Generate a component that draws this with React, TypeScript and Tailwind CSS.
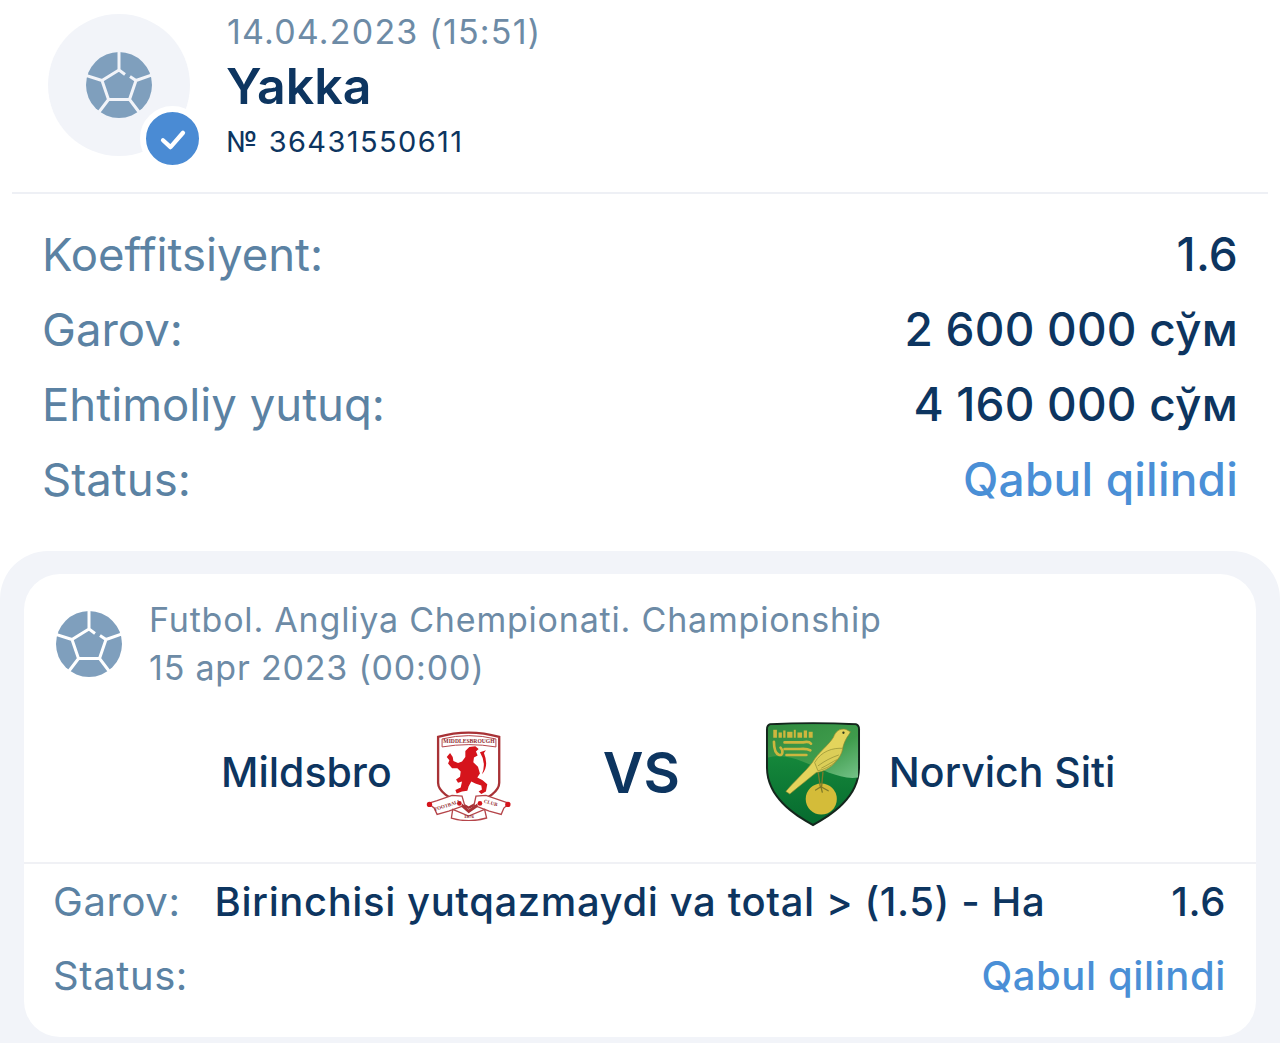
const rows = [
  { label: "Koeffitsiyent:", value: "1.6" },
  { label: "Garov:", value: "2 600 000 сўм" },
  { label: "Ehtimoliy yutuq:", value: "4 160 000 сўм" },
];

const BallIcon = ({ className, gapClass }: { className: string; gapClass: string }) => (
  <svg viewBox="0 0 66 66" className={className}>
    <circle cx="33" cy="33" r="33" fill="#7f9fbd" />
    <g fill="none" strokeWidth="3" className={gapClass}>
      <path d="M33 0V18L39 22.5M44 24.5L50 28.5L66 23M50 28.5L43.5 47.5L53 60M43.5 47.5H22.5L13 60M22.5 47.5L16 28.5L0 23.5M16 28.5L33 18" />
    </g>
  </svg>
);

const MiddlesbroughCrest = () => (
  <svg viewBox="30 35 270 280" className="w-[90px] h-[93px] shrink-0">
    <path d="M78 62Q170 36 262 62V200C262 235 205 255 170 275C135 255 78 235 78 200Z" fill="#fff" stroke="#a83236" strokeWidth="7" />
    <path d="M90 68Q170 48 252 68V92Q170 78 90 92Z" fill="#fff" stroke="#b5454a" strokeWidth="3" />
    <text x="171" y="79" textAnchor="middle" fontSize="17" fontWeight="700" fill="#8f2a2e" fontFamily="Liberation Serif, serif">MIDDLESBROUGH</text>
    {/* lion */}
    <path d="M160 104L172 92L190 90L200 98L192 106L197 118L186 124L184 138L198 152L204 172L196 184L212 192L226 204L222 226L208 234L200 226L210 220L208 208L190 202L178 196L170 210L166 224L150 226L134 232L130 222L146 214L150 196L138 200L132 190L144 182L146 166L136 156L120 156L108 142L112 132L104 122L114 110L122 122L124 134L138 140L150 136L160 122Z" fill="#d5141c" />
    <path d="M204 108Q224 140 210 174Q232 150 216 110L222 102Z" fill="#d5141c" />
    <path d="M48 262L75 254L120 238L150 240L158 268L110 285L75 295L66 276Z" fill="#fff" stroke="#b5454a" strokeWidth="4" />
    <path d="M292 262L268 254L222 238L192 240L186 268L232 285L268 295L276 276Z" fill="#fff" stroke="#b5454a" strokeWidth="4" />
    <path d="M122 280L170 300L218 280L224 306Q170 322 118 306Z" fill="#fff" stroke="#b5454a" strokeWidth="4" />
    <path d="M150 262L170 280L196 262L198 272L170 292L148 272Z" fill="#a83236" />
    <circle cx="52" cy="265" r="8" fill="#d5141c" />
    <circle cx="288" cy="265" r="8" fill="#d5141c" />
    <circle cx="142" cy="262" r="7" fill="#d5141c" />
    <circle cx="204" cy="262" r="7" fill="#d5141c" />
    <text x="108" y="272" transform="rotate(-18 108 272)" textAnchor="middle" fontSize="15" fontWeight="700" fill="#8f2a2e" fontFamily="Liberation Serif, serif">FOOTBALL</text>
    <text x="235" y="265" transform="rotate(16 235 265)" textAnchor="middle" fontSize="15" fontWeight="700" fill="#8f2a2e" fontFamily="Liberation Serif, serif">CLUB</text>
    <text x="171" y="307" textAnchor="middle" fontSize="15" fontWeight="700" fill="#8f2a2e" fontFamily="Liberation Serif, serif">1876</text>
  </svg>
);

const NorwichCrest = () => (
  <svg viewBox="45 28 290 320" className="w-[96px] h-[107px] shrink-0">
    <defs>
      <linearGradient id="gloss" x1="0" y1="0" x2="1" y2="1">
        <stop offset="0" stopColor="#2f8a3e" />
        <stop offset="0.6" stopColor="#3f9c4c" />
        <stop offset="1" stopColor="#74c288" />
      </linearGradient>
      <linearGradient id="lower" x1="0" y1="0" x2="0" y2="1">
        <stop offset="0" stopColor="#1c9440" />
        <stop offset="1" stopColor="#066b2f" />
      </linearGradient>
    </defs>
    <path d="M60 36Q190 30 320 36Q332 38 332 55V170C332 260 250 315 190 347C130 315 48 260 48 170V55Q48 38 60 36Z" fill="#14261c" />
    <path d="M62 42Q190 36 318 42Q326 44 326 56V170C326 256 248 308 190 340C132 308 54 256 54 170V56Q54 44 62 42Z" fill="url(#lower)" />
    <path d="M62 42Q190 36 318 42Q326 44 326 56V200C270 210 200 165 140 145C110 136 80 132 54 140V56Q54 44 62 42Z" fill="url(#gloss)" />
    <g fill="#cdb63e">
      <rect x="70" y="56" width="11" height="24" />
      <rect x="86" y="64" width="10" height="16" />
      <rect x="100" y="58" width="7" height="22" />
      <rect x="112" y="62" width="16" height="18" />
      <rect x="132" y="56" width="6" height="24" />
      <rect x="143" y="64" width="14" height="16" />
      <rect x="162" y="58" width="10" height="22" />
      <rect x="177" y="62" width="12" height="18" />
    </g>
    <g fill="none" stroke="#cdb63e" strokeWidth="8" strokeLinecap="round">
      <path d="M72 92C72 110 76 128 88 132C100 134 100 118 92 110" />
      <path d="M104 94H160Q178 90 184 98" />
      <path d="M104 114H150Q172 112 182 118" />
      <path d="M110 132H170" />
    </g>
    <path d="M290 55C270 50 258 62 252 78C240 100 205 125 188 155C165 185 130 215 108 242L120 250C150 225 175 205 200 185C240 180 270 150 280 110C284 95 288 85 300 68L303 62Z" fill="#e3d45c" stroke="#8d8a30" strokeWidth="2" />
    <path d="M195 155C215 120 250 110 280 112C275 145 245 170 205 180Z" fill="#dbce58" stroke="#8d8a30" strokeWidth="2" />
    <path d="M205 165C225 150 245 140 268 132M215 172C235 162 250 152 262 146" fill="none" stroke="#8d8a30" strokeWidth="2" />
    <circle cx="282" cy="65" r="3.5" fill="#2c3a1c" />
    <circle cx="215" cy="265" r="47" fill="#d4bc39" />
    <path d="M206 186L212 228M220 184L216 228M198 238L214 228L236 240M214 228L218 244" fill="none" stroke="#7f7a28" strokeWidth="4" strokeLinecap="round" />
  </svg>
);

export default function App() {
  return (
    <div className="w-[1280px] h-[1043px] overflow-hidden bg-white font-['Inter',sans-serif]">
      {/* Header */}
      <div className="mx-3 pt-3 pb-[30px] pl-9 flex gap-9 border-b-2 border-[#eef0f5]">
        <div className="relative mt-0.5 w-[142px] h-[142px] rounded-full bg-[#f2f4f9] flex items-center justify-center shrink-0 self-start">
          <BallIcon className="w-[66px] h-[66px]" gapClass="stroke-[#f2f4f9]" />
          <div className="absolute left-[92px] top-[92px] w-[65px] h-[65px] rounded-full bg-[#4a8bd4] border-[6px] border-white flex items-center justify-center box-border">
            <svg viewBox="0 0 24 24" className="w-[30px] h-[30px]" fill="none" stroke="#fff" strokeWidth="3.4" strokeLinecap="round" strokeLinejoin="round">
              <path d="M4 13L10 18.5L20 7" />
            </svg>
          </div>
        </div>
        <div className="flex flex-col">
          <div className="ml-px text-[34px] leading-10 tracking-[1.2px] text-[#6d8ba6]">14.04.2023 (15:51)</div>
          <div className="mt-1.5 text-[50px] leading-[56px] font-semibold text-[#0d3560]">Yakka</div>
          <div className="mt-2 text-[29px] leading-10 tracking-[1.4px] text-[#0d3560]">№ 36431550611</div>
        </div>
      </div>

      {/* Summary */}
      <div className="mt-[23px] mb-[34px] pl-[42px] pr-[42px]">
        {rows.map((row) => (
          <div key={row.label} className="flex justify-between leading-[75px]">
            <span className="text-[45.5px] text-[#5b82a3]">{row.label}</span>
            <span className="text-[46px] tracking-[0.2px] font-medium text-[#0d3560]">{row.value}</span>
          </div>
        ))}
        <div className="flex justify-between leading-[75px]">
          <span className="text-[45.5px] text-[#5b82a3]">Status:</span>
          <span className="text-[46px] tracking-[0.2px] font-medium text-[#4a8fd6]">Qabul qilindi</span>
        </div>
      </div>

      {/* Event card */}
      <div className="h-[500px] rounded-t-[48px] bg-[#f2f4f9] px-6 pt-[23px]">
        <div className="h-[463px] rounded-[36px] bg-white">
          <div className="pt-[22px] pl-8 flex items-center gap-[27px]">
            <BallIcon className="w-[66px] h-[66px] shrink-0" gapClass="stroke-white" />
            <div className="text-[34px] leading-[48px] tracking-[0.8px] text-[#6d8ba6]">
              <div>Futbol. Angliya Chempionati. Championship</div>
              <div>15 apr 2023 (00:00)</div>
            </div>
          </div>

          <div className="mt-[26px] h-[110px] pl-[197px] flex items-center text-[41px] font-medium text-[#0d3560]">
            <span>Mildsbro</span>
            <div className="ml-[30px] mt-[2px]"><MiddlesbroughCrest /></div>
            <span className="ml-[91px] text-[56px] font-semibold">VS</span>
            <div className="ml-[85px]"><NorwichCrest /></div>
            <span className="ml-7">Norvich Siti</span>
          </div>

          <div className="mt-[34px] pt-px border-t-2 border-[#f0f1f5] pl-[29px] pr-[30px] text-[40px] tracking-[0.6px] leading-[74px]">
            <div className="flex">
              <span className="text-[#5b82a3]">Garov:</span>
              <span className="ml-[34px] font-medium text-[#0d3560]">Birinchisi yutqazmaydi va total &gt; (1.5) - Ha</span>
              <span className="ml-auto font-medium text-[#0d3560]">1.6</span>
            </div>
            <div className="flex justify-between">
              <span className="text-[#5b82a3]">Status:</span>
              <span className="font-medium text-[#4a8fd6]">Qabul qilindi</span>
            </div>
          </div>
        </div>
      </div>
    </div>
  );
}
